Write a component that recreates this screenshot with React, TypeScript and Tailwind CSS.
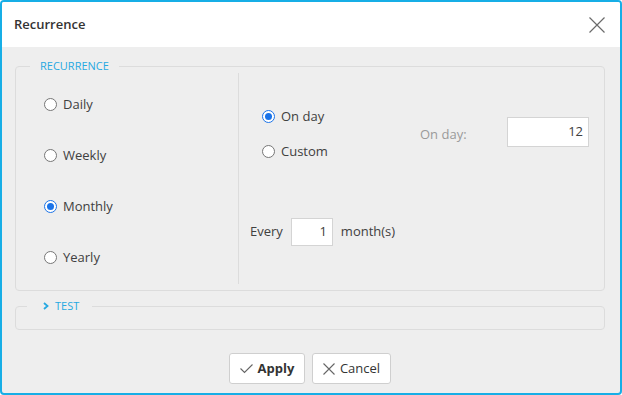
import React from "react";

function Radio({ checked, label }: { checked?: boolean; label: string }) {
  return (
    <div className="flex items-center h-[20px] gap-[6px]">
      {checked ? (
        <span className="w-[13px] h-[13px] rounded-full border-[1.5px] border-[#1a73e8] bg-white flex items-center justify-center">
          <span className="w-[7px] h-[7px] rounded-full bg-[#1a73e8]" />
        </span>
      ) : (
        <span className="w-[13px] h-[13px] rounded-full border border-[#767676] bg-white" />
      )}
      <span className="text-[13px] leading-[20px] text-[#404040]">{label}</span>
    </div>
  );
}

export default function App() {
  return (
    <div
      className="w-[622px] h-[395px] border-2 border-[#17aee6] rounded-[4px] bg-[#eeeeee] flex flex-col overflow-hidden"
      style={{ fontFamily: '"Open Sans", "Noto Sans", sans-serif' }}
    >
      <div className="h-[45px] shrink-0 bg-white flex items-center justify-between pl-[12px] pr-[15px]">
        <span className="text-[13px] font-semibold text-[#333333]">Recurrence</span>
        <svg width="16" height="16" viewBox="0 0 16 16" className="block">
          <path d="M0.5 0.5 L15.5 15.5 M15.5 0.5 L0.5 15.5" stroke="#6b6b6b" strokeWidth="1.2" fill="none" />
        </svg>
      </div>
      <div className="flex-1 flex flex-col pt-[12px] pl-[13px] pr-[15px]">
        <fieldset className="border border-[#dcdcdc] rounded-[4px] pb-[6px]">
          <legend className="ml-[14px] px-[10px] text-[11px] leading-[14px] text-[#27a9e1]">RECURRENCE</legend>
          <div className="flex h-[211px]">
            <div className="w-[223px] border-r border-[#dcdcdc] flex flex-col pl-[28px] pt-[21px] gap-[31px]">
              <Radio label="Daily" />
              <Radio label="Weekly" />
              <Radio checked label="Monthly" />
              <Radio label="Yearly" />
            </div>
            <div className="flex-1 flex flex-col pl-[11px] pt-[33px]">
              <div className="flex items-start">
                <div className="ml-[12px] w-[158px] flex flex-col gap-[15px]">
                  <Radio checked label="On day" />
                  <Radio label="Custom" />
                </div>
                <span className="w-[87px] mt-[18px] text-[13px] leading-[20px] text-[#9a9a9a]">On day:</span>
                <div className="w-[82px] h-[30px] mt-[11px] bg-white border border-[#d4d4d4] flex items-center justify-end pr-[5px] text-[13px] text-[#404040]">
                  12
                </div>
              </div>
              <div className="flex items-center mt-[57px] h-[28px]">
                <span className="text-[13px] text-[#404040]">Every</span>
                <div className="ml-[8px] w-[42px] h-[28px] bg-white border border-[#d4d4d4] flex items-center justify-end pr-[5px] text-[13px] text-[#404040]">
                  1
                </div>
                <span className="ml-[8px] text-[13px] text-[#404040]">month(s)</span>
              </div>
            </div>
          </div>
        </fieldset>
        <fieldset className="mt-[8px] border border-[#dcdcdc] rounded-[4px]">
          <legend className="ml-[11px] pl-[16px] pr-[13px] text-[11px] leading-[14px] text-[#27a9e1]">
            <span className="flex items-center gap-[6px]">
              <svg width="6" height="8" viewBox="0 0 6 8" className="block">
                <path d="M1 1 L4.5 4 L1 7" stroke="#27a9e1" strokeWidth="1.8" fill="none" />
              </svg>
              TEST
            </span>
          </legend>
          <div className="h-[16px]" />
        </fieldset>
        <div className="mt-[23px] flex justify-center gap-[7px]">
          <button className="w-[76px] h-[31px] border border-[#cfcfcf] rounded-[3px] bg-white flex items-center justify-center gap-[5px] text-[13px] font-bold text-[#333333]">
            <svg width="13" height="10" viewBox="0 0 13 10" className="block">
              <path d="M0.5 4.5 L4.5 8.5 L12.5 0.5" stroke="#666666" strokeWidth="1.1" fill="none" />
            </svg>
            Apply
          </button>
          <button className="w-[79px] h-[31px] border border-[#cfcfcf] rounded-[3px] bg-white flex items-center justify-center gap-[5px] text-[13px] text-[#333333]">
            <svg width="12" height="12" viewBox="0 0 12 12" className="block">
              <path d="M0.5 0.5 L11.5 11.5 M11.5 0.5 L0.5 11.5" stroke="#666666" strokeWidth="1.1" fill="none" />
            </svg>
            Cancel
          </button>
        </div>
      </div>
    </div>
  );
}
